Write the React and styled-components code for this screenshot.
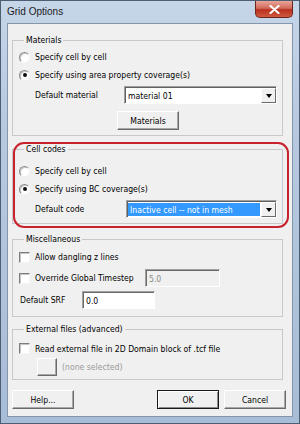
import React from "react";
import styled, { createGlobalStyle } from "styled-components";

const Global = createGlobalStyle`
html, body {
  margin: 0;
  padding: 0;
}
body {
  width: 300px;
  height: 424px;
  overflow: hidden;
  font-family: "DejaVu Sans Condensed", "Liberation Sans", Arial, sans-serif;
  font-stretch: condensed;
  font-size: 8.6px;
  color: #000;
}
`

const Window = styled.div`
box-sizing: border-box;
width: 300px;
height: 424px;
display: flex;
flex-direction: column;
border: 1px solid #4e5e72;
background: linear-gradient(180deg, #c6d6e9 0%, #b6c9df 30%, #a8bdd6 100%);
`

const TitleBar = styled.div`
height: 22px;
display: flex;
justify-content: space-between;
align-items: flex-start;
padding-left: 6px;
`

const Title = styled.div`
font-family: "Liberation Sans", Arial, sans-serif;
font-stretch: normal;
font-size: 10px;
line-height: 22px;
color: #1a1a1a;
`

const CloseButton = styled.div`
width: 38px;
height: 17px;
margin-right: 6px;
box-sizing: border-box;
border: 1px solid #6e2520;
border-top: none;
border-radius: 0 0 5px 5px;
background: linear-gradient(180deg, #e7a699 0%, #d26a5a 45%, #b9301f 55%, #cf5b3f 100%);
display: flex;
align-items: center;
justify-content: center;
`

const Client = styled.div`
flex: 1;
margin: 0 6px 6px 6px;
border: 1px solid #8596ab;
background: #f0f0f0;
padding: 10px 6px 0 4px;
display: flex;
flex-direction: column;
`

const Group = styled.fieldset`
margin: ${p => p.$top || 0}px 3px 0 0;
padding: ${p => p.$pt}px 5px ${p => p.$pb}px 6px;
border: 1px solid #c6c9cc;
display: flex;
flex-direction: column;
min-width: 0;
`

const Legend = styled.legend`
padding: 0 2px;
margin-left: 5px;
line-height: 12px;
`

const HighlightWrap = styled.div`
position: relative;
margin-top: 7px;
`

const Ring = styled.div`
position: absolute;
top: -1px;
left: 1px;
right: -3px;
bottom: -4px;
border: 2px solid #c8232d;
border-radius: 11px;
pointer-events: none;
`

const Row = styled.div`
height: ${p => p.$h || 18}px;
display: flex;
align-items: center;
padding-left: ${p => p.$indent || 0}px;
`

const Radio = styled.span`
box-sizing: border-box;
width: 11px;
height: 11px;
border-radius: 50%;
background: #fff;
border: 1px solid;
border-color: #8a8a8a #f4f4f4 #f4f4f4 #8a8a8a;
box-shadow: inset 1px 1px 0 #c8c8c8;
margin-right: 5px;
display: flex;
align-items: center;
justify-content: center;
flex-shrink: 0;
&::after {
  content: "";
  width: 4px;
  height: 4px;
  border-radius: 50%;
  background: ${p => (p.$checked ? "#111" : "transparent")};
}
`

const Check = styled.span`
box-sizing: border-box;
width: 11px;
height: 11px;
background: #fff;
border: 1px solid;
border-color: #7d7d7d #f4f4f4 #f4f4f4 #7d7d7d;
box-shadow: inset 1px 1px 0 #c4c4c4;
margin-right: 5px;
flex-shrink: 0;
`

const Label = styled.span`
width: ${p => (p.$w ? `${p.$w}px` : "auto")};
flex-shrink: 0;
color: ${p => (p.$muted ? "#9a9a9a" : "#000")};
white-space: nowrap;
`

const Combo = styled.div`
flex: 1;
height: 18px;
box-sizing: border-box;
display: flex;
align-items: stretch;
background: #fff;
border: 1px solid;
border-color: #a0a0a0 #fff #fff #a0a0a0;
box-shadow: inset 1px 1px 0 #5f5f5f;
padding: 1px 0 0 1px;
`

const ComboText = styled.div`
flex: 1;
display: flex;
align-items: center;
padding-left: 2px;
margin: ${p => (p.$selected ? "1px 1px 1px 0" : "0")};
background: ${p => (p.$selected ? "#3399ff" : "transparent")};
color: ${p => (p.$selected ? "#fff" : "#000")};
white-space: nowrap;
overflow: hidden;
`

const ComboArrow = styled.div`
width: 15px;
box-sizing: border-box;
background: #f0f0f0;
border: 1px solid;
border-color: #fff #6a6a6a #6a6a6a #fff;
display: flex;
align-items: center;
justify-content: center;
&::after {
  content: "";
  border-left: 3.5px solid transparent;
  border-right: 3.5px solid transparent;
  border-top: 4px solid #000;
}
`

const TextBox = styled.div`
width: ${p => p.$w}px;
height: 18px;
box-sizing: border-box;
border: 1px solid;
border-color: #a0a0a0 #fff #fff #a0a0a0;
box-shadow: inset 1px 1px 0 #6a6a6a;
background: ${p => (p.$disabled ? "#f0f0f0" : "#fff")};
color: ${p => (p.$disabled ? "#8a8a8a" : "#000")};
padding: 1px 0 0 3px;
display: flex;
align-items: center;
`

const Button = styled.div`
width: ${p => p.$w || 62}px;
height: ${p => p.$h || 19}px;
box-sizing: border-box;
display: flex;
align-items: center;
justify-content: center;
background: #f0f0f0;
border: 1px solid;
border-color: ${p => (p.$default ? "#1a1a1a" : "#fff #6a6a6a #6a6a6a #fff")};
box-shadow: ${p =>
    p.$default
      ? "inset 1px 1px 0 #fff, inset -1px -1px 0 #8a8a8a"
      : "inset -1px -1px 0 #a8a8a8"};
align-self: ${p => p.$align || "auto"};
margin-left: ${p => p.$ml || 0}px;
flex-shrink: 0;
`

const Footer = styled.div`
margin-top: 10px;
display: flex;
justify-content: space-between;
`

const ButtonGroup = styled.div`
display: flex;
gap: 5px;
`

const CloseIcon = () => (
  <svg width="11" height="9" viewBox="0 0 11 9">
    <path d="M1.5 1 L9.5 8 M9.5 1 L1.5 8" stroke="#fff" strokeWidth="2.2" strokeLinecap="round" />
  </svg>
)

export default function App() {
  return (
    <>
      <Global />
      <Window>
        <TitleBar>
          <Title>Grid Options</Title>
          <CloseButton>
            <CloseIcon />
          </CloseButton>
        </TitleBar>
        <Client>
          <Group $pt={2} $pb={5}>
            <Legend>Materials</Legend>
            <Row>
              <Radio />
              <Label>Specify cell by cell</Label>
            </Row>
            <Row>
              <Radio $checked />
              <Label>Specify using area property coverage(s)</Label>
            </Row>
            <Row $h={22} $indent={16}>
              <Label $w={89}>Default material</Label>
              <Combo>
                <ComboText>material 01</ComboText>
                <ComboArrow />
              </Combo>
            </Row>
            <Button $align="center" style={{ marginTop: 5 }}>Materials</Button>
          </Group>

          <HighlightWrap>
            <Group $pt={7} $pb={3}>
              <Legend>Cell codes</Legend>
              <Row>
                <Radio />
                <Label>Specify cell by cell</Label>
              </Row>
              <Row>
                <Radio $checked />
                <Label>Specify using BC coverage(s)</Label>
              </Row>
              <Row $h={22} $indent={16}>
                <Label $w={91}>Default code</Label>
                <Combo>
                  <ComboText $selected>Inactive cell -- not in mesh</ComboText>
                  <ComboArrow />
                </Combo>
              </Row>
            </Group>
            <Ring />
          </HighlightWrap>

          <Group $top={9} $pt={2} $pb={5}>
            <Legend>Miscellaneous</Legend>
            <Row $h={20}>
              <Check />
              <Label>Allow dangling z lines</Label>
            </Row>
            <Row $h={22}>
              <Check />
              <Label $w={110}>Override Global Timestep</Label>
              <TextBox $w={75} $disabled>5.0</TextBox>
            </Row>
            <Row $h={22} $indent={1}>
              <Label $w={62}>Default SRF</Label>
              <TextBox $w={73}>0.0</TextBox>
            </Row>
          </Group>

          <Group $top={6} $pt={5} $pb={3}>
            <Legend>External files (advanced)</Legend>
            <Row $h={17}>
              <Check />
              <Label>Read external file in 2D Domain block of .tcf file</Label>
            </Row>
            <Row $h={19}>
              <Button $w={20} $h={18} $ml={18} />
              <Label $muted style={{ marginLeft: 5 }}>(none selected)</Label>
            </Row>
          </Group>

          <Footer>
            <Button>Help...</Button>
            <ButtonGroup>
              <Button $default>OK</Button>
              <Button>Cancel</Button>
            </ButtonGroup>
          </Footer>
        </Client>
      </Window>
    </>
  )
}
